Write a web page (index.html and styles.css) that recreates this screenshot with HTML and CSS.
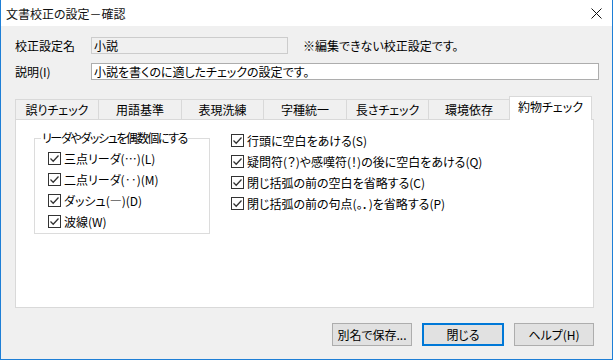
FILE: index.html
```html
<!DOCTYPE html>
<html lang="ja">

<head>
    <meta charset="UTF-8">
    <title>文書校正の設定－確認</title>
    <link rel="stylesheet" href="styles.css">
</head>

<body>
    <div class="window">
        <div class="titlebar">
            <span class="title">文書校正の設定－確認</span>
            <span class="close">
                <svg width="11" height="11" viewBox="0 0 11 11"><path d="M0.5 0.5L10.5 10.5M10.5 0.5L0.5 10.5" stroke="#111" stroke-width="1"/></svg>
            </span>
        </div>
        <div class="body">
            <div class="fields">
                <div class="field-label">校正設定名</div>
                <div class="field-row">
                    <div class="input disabled">小説</div>
                    <div class="note">※編集できない校正設定です。</div>
                </div>
                <div class="field-label">説明(I)</div>
                <div class="input wide">小説を書くのに適したチェックの設定です。</div>
            </div>

            <div class="tabs">
                <div class="tab">誤りチェック</div>
                <div class="tab">用語基準</div>
                <div class="tab">表現洗練</div>
                <div class="tab">字種統一</div>
                <div class="tab">長さチェック</div>
                <div class="tab">環境依存</div>
                <div class="tab active">約物チェック</div>
            </div>
            <div class="panel">
                <fieldset class="group">
                    <legend>リーダやダッシュを偶数個にする</legend>
                    <label class="check"><span class="box"></span>三点リーダ(…)(L)</label>
                    <label class="check"><span class="box"></span>二点リーダ(‥)(M)</label>
                    <label class="check"><span class="box"></span>ダッシュ(―)(D)</label>
                    <label class="check"><span class="box"></span>波線(W)</label>
                </fieldset>
                <div class="checks">
                    <label class="check"><span class="box"></span>行頭に空白をあける(S)</label>
                    <label class="check"><span class="box"></span>疑問符(？)や感嘆符(！)の後に空白をあける(Q)</label>
                    <label class="check"><span class="box"></span>閉じ括弧の前の空白を省略する(C)</label>
                    <label class="check"><span class="box"></span>閉じ括弧の前の句点(。．)を省略する(P)</label>
                </div>
            </div>

            <div class="buttons">
                <div class="button">別名で保存...</div>
                <div class="button default">閉じる</div>
                <div class="button">ヘルプ(H)</div>
            </div>
        </div>
    </div>
</body>

</html>
```

FILE: styles.css
```css
* {
    margin: 0;
    padding: 0;
    box-sizing: border-box;
    font-family: "Noto Sans CJK JP", "Noto Sans", sans-serif;
    font-feature-settings: "palt";
}

body {
    width: 613px;
    height: 360px;
    font-size: 12px;
    color: #000;
    overflow: hidden;
}

.window {
    width: 613px;
    height: 360px;
    border: 1px solid #1e7fd6;
    border-top: none;
    background: #f0f0f0;
    display: flex;
    flex-direction: column;
}

.titlebar {
    height: 26px;
    background: #fff;
    display: flex;
    align-items: center;
    justify-content: space-between;
    padding: 0 10px 0 5px;
}

.title {
    font-size: 12px;
    color: #111;
}

.close {
    display: flex;
}

.body {
    padding: 11px 12px 0 14px;
    flex: 1;
    display: flex;
    flex-direction: column;
}

.fields {
    display: grid;
    grid-template-columns: 76px 1fr;
    row-gap: 9px;
    align-items: center;
    padding-right: 1px;
}

.field-label {
    line-height: 16px;
}

.field-row {
    display: flex;
    align-items: center;
    gap: 15px;
}

.input {
    height: 17px;
    line-height: 15px;
    border: 1px solid #adadad;
    background: #fff;
    padding: 0 2px;
    white-space: nowrap;
}

.input.disabled {
    width: 197px;
    background: #f0f0f0;
    border-color: #ccc;
}

.input.wide {
    width: 508px;
}

.tabs {
    display: flex;
    margin-top: 16px;
    align-items: flex-end;
    height: 23px;
    position: relative;
    z-index: 1;
}

.tab {
    width: 84px;
    height: 20px;
    line-height: 19px;
    text-align: center;
    border: 1px solid #d9d9d9;
    border-bottom: none;
    margin-right: -1px;
    background: #f0f0f0;
}

.tab:nth-child(3) {
    width: 83px;
}

.tab:nth-child(5) {
    width: 83px;
}

.tab:nth-child(6) {
    width: 82px;
}

.tab.active {
    width: 83px;
    height: 24px;
    line-height: 19px;
    background: #fff;
    margin-right: 0;
    margin-bottom: -1px;
}

.panel {
    width: 579px;
    height: 189px;
    border: 1px solid #d9d9d9;
    background: #fff;
    display: flex;
    padding: 9px 0 0 18px;
    gap: 21px;
}

.group {
    width: 176px;
    min-width: 0;
    height: 103px;
    margin-top: 2px;
    border: 1px solid #dcdcdc;
    padding: 4px 0 0 13px;
    display: flex;
    flex-direction: column;
    gap: 3px;
    flex-shrink: 0;
}

.group legend {
    padding: 0 1px;
    margin-left: -7px;
    line-height: 14px;
    white-space: nowrap;
    letter-spacing: -1.4px;
}

.checks {
    display: flex;
    flex-direction: column;
    gap: 3px;
    padding-top: 2px;
}

.check {
    display: flex;
    align-items: center;
    gap: 3px;
    height: 18px;
    white-space: nowrap;
}

.box {
    width: 13px;
    height: 13px;
    border: 1px solid #333;
    background: #fff url("data:image/svg+xml;utf8,<svg xmlns='http://www.w3.org/2000/svg' width='11' height='11'><path d='M1.5 5.5L4.2 8.2L9.5 2.5' fill='none' stroke='%23333' stroke-width='1.3'/></svg>") no-repeat center;
}

.buttons {
    display: flex;
    justify-content: flex-end;
    gap: 10px;
    margin-top: 15px;
    padding-right: 6px;
}

.button {
    width: 80px;
    height: 23px;
    line-height: 21px;
    text-align: center;
    background: #e1e1e1;
    border: 1px solid #adadad;
}

.button.default {
    border: 2px solid #0078d7;
    line-height: 19px;
    width: 82px;
}
```
